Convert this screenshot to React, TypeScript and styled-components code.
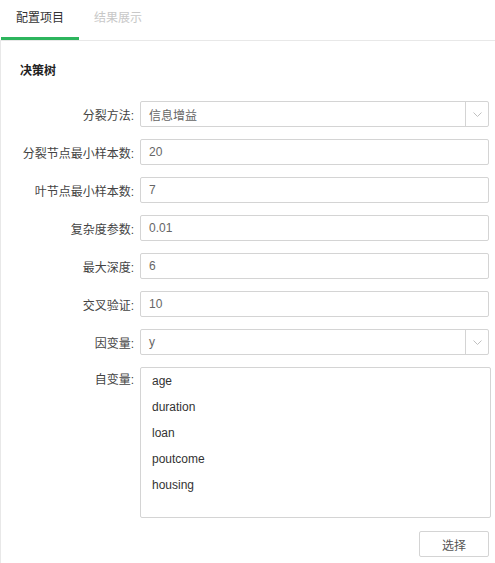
import styled, { createGlobalStyle } from "styled-components";

const GlobalStyle = createGlobalStyle`
    body {
        margin: 0;
        background: #fff;
        font-family: "Liberation Sans", "Noto Sans CJK SC", sans-serif;
        font-size: 12px;
        color: #333;
    }
`;

const Page = styled.div`
    width: 495px;
    height: 563px;
    display: flex;
    flex-direction: column;
    overflow: hidden;
`;

const TabBar = styled.div`
    height: 40px;
    display: flex;
    padding-left: 1px;
    border-bottom: 1px solid #e8e8e8;
`;

const Tab = styled.div<{ $active?: boolean }>`
    width: 78px;
    display: flex;
    align-items: center;
    justify-content: center;
    padding-bottom: 4px;
    box-sizing: border-box;
    color: ${(p) => (p.$active ? "#333" : "#c8c8c8")};
    border-bottom: 3px solid ${(p) => (p.$active ? "#2db55d" : "transparent")};
`;

const Panel = styled.div`
    flex: 1;
    border-left: 1px solid #e8e8e8;
    padding: 20px 0 0 0;
`;

const Title = styled.div`
    font-weight: bold;
    line-height: 20px;
    padding-left: 19px;
    margin-bottom: 20px;
    color: #222;
`;

const Form = styled.div`
    display: flex;
    flex-direction: column;
    gap: 12px;
`;

const Row = styled.div<{ $top?: boolean }>`
    display: grid;
    grid-template-columns: 139px 1fr;
    align-items: ${(p) => (p.$top ? "start" : "center")};
`;

const Label = styled.label<{ $top?: boolean }>`
    text-align: right;
    padding-right: 6px;
    color: #444;
    line-height: ${(p) => (p.$top ? "26px" : "normal")};
`;

const Field = styled.div`
    height: 26px;
    width: 349px;
    box-sizing: border-box;
    border: 1px solid #d4d4d4;
    border-radius: 2px;
    display: flex;
    align-items: center;
    color: #666;
`;

const Value = styled.span`
    flex: 1;
    padding-left: 8px;
`;

const Arrow = styled.span`
    width: 22px;
    align-self: stretch;
    border-left: 1px solid #d4d4d4;
    display: flex;
    align-items: center;
    justify-content: center;
`;

const ListBox = styled.div`
    width: 351px;
    height: 151px;
    box-sizing: border-box;
    border: 1px solid #d4d4d4;
    border-radius: 2px;
`;

const ListItem = styled.div`
    line-height: 26px;
    padding-left: 11px;
    color: #333;
`;

const Footer = styled.div`
    display: flex;
    justify-content: flex-end;
    padding: 13px 6px 0 0;
`;

const Button = styled.button`
    width: 70px;
    height: 26px;
    background: #fff;
    border: 1px solid #d4d4d4;
    border-radius: 2px;
    font-family: inherit;
    font-size: 12px;
    color: #555;
    padding: 0;
`;

const Chevron = () => (
    <svg width="9" height="5" viewBox="0 0 9 5">
        <path d="M0.5 0.5 L4.5 4.5 L8.5 0.5" fill="none" stroke="#c0c0c0" strokeWidth="1" />
    </svg>
);

const inputs = [
    { label: "分裂方法:", value: "信息增益", select: true },
    { label: "分裂节点最小样本数:", value: "20" },
    { label: "叶节点最小样本数:", value: "7" },
    { label: "复杂度参数:", value: "0.01" },
    { label: "最大深度:", value: "6" },
    { label: "交叉验证:", value: "10" },
    { label: "因变量:", value: "y", select: true },
];

const features = ["age", "duration", "loan", "poutcome", "housing"];

export default function App() {
    return (
        <Page>
            <GlobalStyle />
            <TabBar>
                <Tab $active>配置项目</Tab>
                <Tab>结果展示</Tab>
            </TabBar>
            <Panel>
                <Title>决策树</Title>
                <Form>
                    {inputs.map((f) => (
                        <Row key={f.label}>
                            <Label>{f.label}</Label>
                            <Field>
                                <Value>{f.value}</Value>
                                {f.select && (
                                    <Arrow>
                                        <Chevron />
                                    </Arrow>
                                )}
                            </Field>
                        </Row>
                    ))}
                    <Row $top>
                        <Label $top>自变量:</Label>
                        <ListBox>
                            {features.map((name) => (
                                <ListItem key={name}>{name}</ListItem>
                            ))}
                        </ListBox>
                    </Row>
                </Form>
                <Footer>
                    <Button>选择</Button>
                </Footer>
            </Panel>
        </Page>
    );
}
